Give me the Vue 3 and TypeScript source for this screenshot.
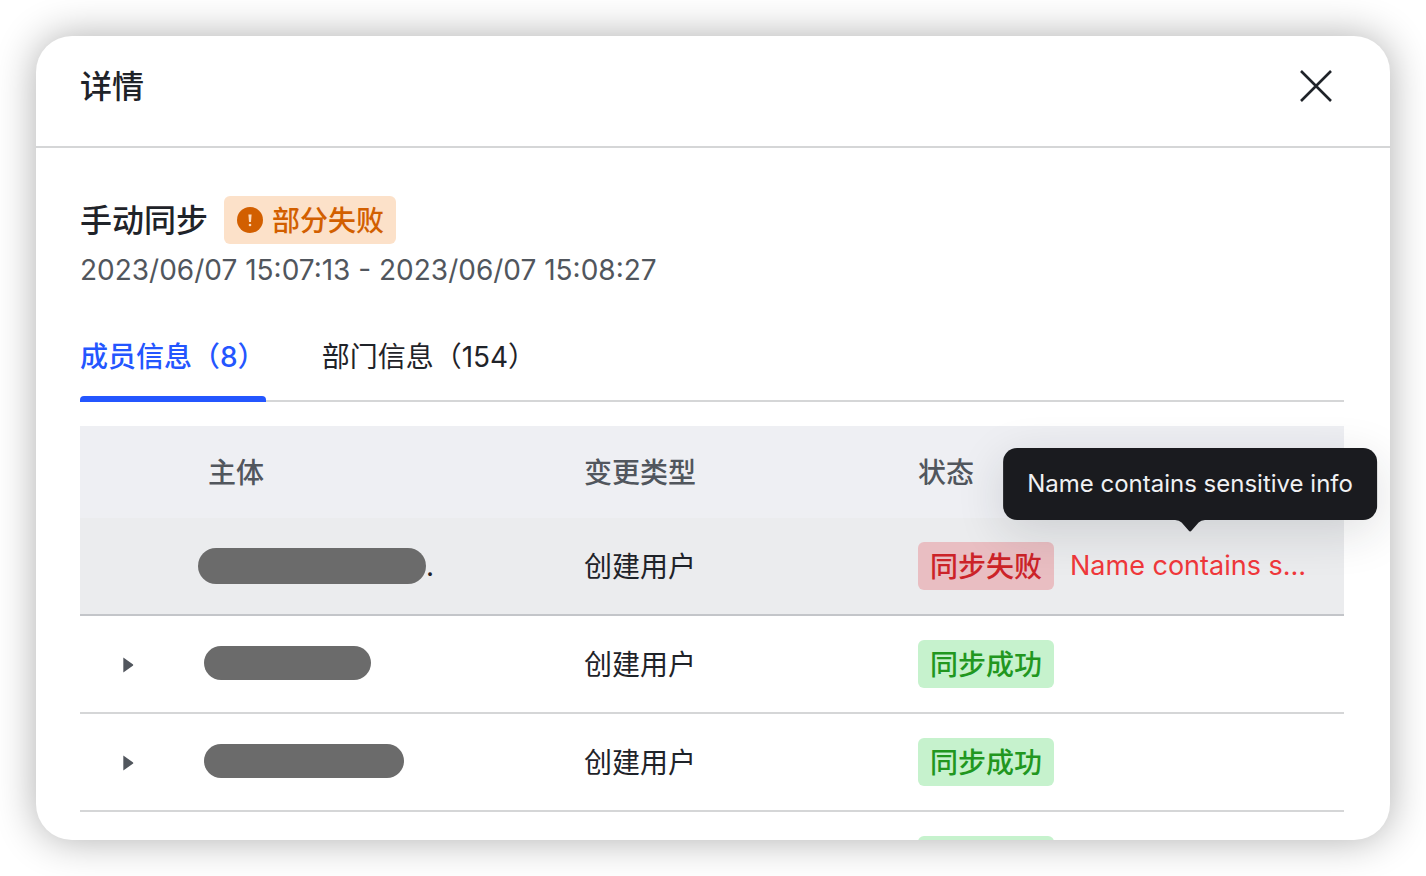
<script setup lang="ts">
import { ref } from 'vue'

type Status = 'failed' | 'success'

interface MemberRow {
  id: number
  maskWidth: number
  maskHeight: number
  tail: string
  change: string
  status: Status
  error?: string
  expandable: boolean
}

const statusText: Record<Status, string> = {
  failed: '同步失败',
  success: '同步成功',
}

const tabs = [
  { key: 'members', label: '成员信息（8）' },
  { key: 'departments', label: '部门信息（154）' },
]
const activeTab = ref('members')
const expanded = ref<number[]>([])

const rows: MemberRow[] = [
  { id: 1, maskWidth: 228, maskHeight: 36, tail: '.', change: '创建用户', status: 'failed', error: 'Name contains sensitive info', expandable: false },
  { id: 2, maskWidth: 167, maskHeight: 34, tail: '', change: '创建用户', status: 'success', expandable: true },
  { id: 3, maskWidth: 200, maskHeight: 34, tail: '', change: '创建用户', status: 'success', expandable: true },
  { id: 4, maskWidth: 180, maskHeight: 34, tail: '', change: '创建用户', status: 'success', expandable: true },
]

function toggle(id: number) {
  expanded.value = expanded.value.includes(id)
    ? expanded.value.filter((n) => n !== id)
    : [...expanded.value, id]
}
</script>

<template>
  <main class="stage">
    <section class="dialog" role="dialog" aria-labelledby="dialog-title">
      <header class="dialog-head">
        <h1 id="dialog-title">详情</h1>
        <button class="close" type="button" aria-label="关闭">
          <svg viewBox="0 0 36 36" width="36" height="36" fill="none" stroke="#1f2329" stroke-width="2.6">
            <path d="M3 3 33 33M33 3 3 33" />
          </svg>
        </button>
      </header>

      <div class="dialog-body">
        <div class="summary">
          <h2>手动同步</h2>
          <span class="tag tag-partial">
            <svg viewBox="0 0 28 28" width="28" height="28" aria-hidden="true">
              <circle cx="14" cy="13" r="13" fill="#d25f00" />
              <path d="M12.4 7.5h3.2l-.6 7.600h-2z" fill="#fbdcc0" />
              <circle cx="14" cy="18" r="1.300" fill="#fbdcc0" />
            </svg>
            部分失败
          </span>
        </div>
        <p class="period">2023/06/07 15:07:13 - 2023/06/07 15:08:27</p>

        <nav class="tabs" role="tablist">
          <button
            v-for="tab in tabs"
            :key="tab.key"
            class="tab"
            :class="{ active: activeTab === tab.key }"
            type="button"
            role="tab"
            :aria-selected="activeTab === tab.key"
            @click="activeTab = tab.key"
          >
            {{ tab.label }}
          </button>
        </nav>

        <table class="grid">
          <colgroup>
            <col class="col-toggle" />
            <col class="col-subject" />
            <col class="col-change" />
            <col />
          </colgroup>
          <thead>
            <tr>
              <th></th>
              <th scope="col">主体</th>
              <th scope="col">变更类型</th>
              <th scope="col">状态</th>
            </tr>
          </thead>
          <tbody>
            <tr v-for="row in rows" :key="row.id" :class="{ hovered: row.error }">
              <td class="toggle-cell">
                <button
                  v-if="row.expandable"
                  class="toggle"
                  type="button"
                  aria-label="展开"
                  :aria-expanded="expanded.includes(row.id)"
                  @click="toggle(row.id)"
                >
                  <svg viewBox="0 0 12 16" width="12" height="16">
                    <path d="M1.3 0.6 10.8 7.2Q11.8 8 10.8 8.8L1.3 15.4Z" fill="#51565d" />
                  </svg>
                </button>
              </td>
              <td class="subject-cell">
                <div class="subject">
                  <span class="mask" :style="{ width: row.maskWidth + 'px', height: row.maskHeight + 'px' }"></span>
                  <span v-if="row.tail">{{ row.tail }}</span>
                </div>
              </td>
              <td class="change-cell">{{ row.change }}</td>
              <td>
                <div class="status">
                  <span class="tag" :class="'tag-' + row.status">{{ statusText[row.status] }}</span>
                  <div v-if="row.error" class="error">
                    <span class="error-text">{{ row.error }}</span>
                    <div class="tooltip" role="tooltip">
                      {{ row.error }}
                      <svg class="tooltip-arrow" viewBox="0 0 30 12" width="30" height="12">
                        <path d="M0 0Q4 0 6.500 2.500L13.500 10.500Q15 12.500 16.500 10.500L23.500 2.500Q26 0 30 0Z" fill="#1a1b1f" />
                      </svg>
                    </div>
                  </div>
                </div>
              </td>
            </tr>
          </tbody>
        </table>
      </div>
    </section>
  </main>
</template>

<style>
body {
  margin: 0;
  background: #fff;
}
</style>

<style scoped>
.stage {
  box-sizing: border-box;
  height: 100vh;
  padding: 36px;
  font-family: Inter, 'Noto Sans CJK SC', sans-serif;
  font-size: 28px;
  line-height: 44px;
  color: #1f2329;
}

.dialog {
  height: 100%;
  border-radius: 36px;
  background: #fff;
  box-shadow: 0 0 40px rgba(0, 0, 0, 0.32);
  overflow: hidden;
}

.dialog-head {
  display: flex;
  align-items: center;
  justify-content: space-between;
  box-sizing: border-box;
  height: 112px;
  padding: 0 56px 10px 44px;
  border-bottom: 2px solid #d5d6d7;
}

h1,
h2 {
  margin: 0;
  padding-top: 2px;
  font-size: 32px;
  line-height: 46px;
  font-weight: 500;
}

button {
  padding: 0;
  border: 0;
  background: none;
  font: inherit;
  color: inherit;
  cursor: pointer;
}

svg {
  display: block;
}

.dialog-body {
  padding: 48px 46px 0 44px;
}

.summary {
  display: flex;
  align-items: center;
  gap: 16px;
}

.tag {
  display: inline-flex;
  align-items: center;
  flex: none;
  box-sizing: border-box;
  height: 48px;
  padding: 2px 12px 0;
  border-radius: 6px;
  font-weight: 500;
  white-space: nowrap;
}

.tag-partial {
  gap: 8px;
  background: #fce1c9;
  color: #d25f00;
}

.tag-failed {
  background: #e9bec2;
  color: #cc2328;
}

.tag-success {
  background: #c6f2cd;
  color: #22971f;
}

.period {
  margin: 4px 0 0;
  color: #51565d;
}

.tabs {
  display: flex;
  gap: 56px;
  margin-top: 20px;
  border-bottom: 2px solid #d5d6d7;
}

.tab {
  position: relative;
  height: 88px;
  padding-top: 2px;
}

.tab.active {
  color: #2456ff;
  font-weight: 500;
}

.tab.active::after {
  content: '';
  position: absolute;
  left: 0;
  right: 0;
  bottom: -2px;
  height: 6px;
  border-radius: 4px 4px 0 0;
  background: #2456ff;
}

.grid {
  width: 100%;
  margin-top: 24px;
  border-collapse: separate;
  border-spacing: 0;
  table-layout: fixed;
}

.col-toggle {
  width: 104px;
}

.col-subject {
  width: 376px;
}

.col-change {
  width: 334px;
}

th,
td {
  box-sizing: border-box;
  padding: 0 0 0 24px;
  text-align: left;
}

th {
  height: 92px;
  padding-top: 2px;
  background: #eeeff3;
  color: #51565d;
  font-weight: 500;
}

td {
  height: 98px;
  border-bottom: 2px solid #d5d6d7;
}

.hovered td {
  background: #ebecee;
  border-bottom-color: #c3c5c9;
}

.toggle-cell {
  padding-top: 2px;
  padding-left: 36px;
}

.change-cell {
  padding-top: 2px;
}

.toggle {
  display: grid;
  place-items: center;
  width: 24px;
  height: 24px;
}

.subject-cell {
  padding-bottom: 2px;
  padding-left: 20px;
}

.hovered .subject-cell {
  padding-bottom: 0;
  padding-left: 14px;
}

.subject {
  display: flex;
  align-items: center;
}

.mask {
  border-radius: 18px;
  background: #6b6b6b;
}

.status {
  display: flex;
  align-items: center;
  gap: 16px;
}

.error {
  position: relative;
  width: 240px;
}

.error-text {
  display: block;
  overflow: hidden;
  text-overflow: ellipsis;
  white-space: nowrap;
  font-size: 27px;
  color: #f0383b;
}

.tooltip {
  position: absolute;
  left: 50%;
  bottom: calc(100% + 24px);
  transform: translateX(-50%);
  padding: 14px 24px;
  border-radius: 14px;
  background: #1a1b1f;
  box-shadow: 0 12px 48px rgba(31, 35, 41, 0.14);
  color: #f0f1f3;
  font-size: 24px;
  white-space: nowrap;
}

.tooltip-arrow {
  position: absolute;
  top: 100%;
  left: 50%;
  transform: translateX(-50%);
}
</style>
